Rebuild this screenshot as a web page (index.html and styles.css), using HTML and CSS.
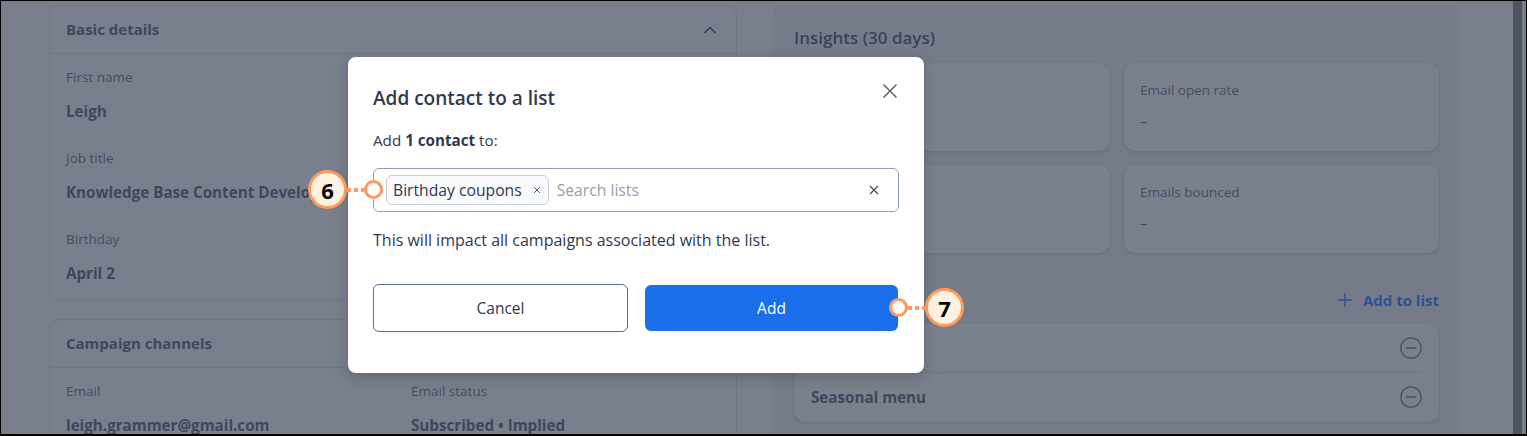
FILE: index.html
```html
<!DOCTYPE html>
<html lang="en">
<head>
  <meta charset="UTF-8" />
  <meta name="viewport" content="width=device-width, initial-scale=1.0" />
  <title>Add contact to a list</title>
  <link rel="stylesheet" href="styles.css">
</head>
<body>
  <div id="frame">
    <div id="page">
      <div id="details">
        <section class="panel panel-basic">
          <div class="panel-head">
            <h3>Basic details</h3>
            <svg class="chevron" width="14" height="8" viewBox="0 0 14 8"><path d="M1.5 7L7 1.5 12.5 7" fill="none" stroke="#323b54" stroke-width="1.3"/></svg>
          </div>
          <div class="panel-body">
            <div class="field"><span class="label">First name</span><span class="value">Leigh</span></div>
            <div class="field"><span class="label">Job title</span><span class="value">Knowledge Base Content Developer</span></div>
            <div class="field"><span class="label">Birthday</span><span class="value">April 2</span></div>
          </div>
        </section>
        <section class="panel">
          <div class="panel-head">
            <h3>Campaign channels</h3>
          </div>
          <div class="panel-body two-col">
            <div class="field"><span class="label">Email</span><span class="value">leigh.grammer@gmail.com</span></div>
            <div class="field"><span class="label">Email status</span><span class="value">Subscribed • Implied</span></div>
          </div>
        </section>
      </div>

      <div id="insights">
        <h2>Insights (30 days)</h2>
        <div class="stat-grid">
          <div class="stat"></div>
          <div class="stat"><span class="label">Email open rate</span><span class="stat-num">–</span></div>
          <div class="stat"></div>
          <div class="stat"><span class="label">Emails bounced</span><span class="stat-num">–</span></div>
        </div>
        <div class="list-head">
          <a class="add-link">
            <svg width="14" height="14" viewBox="0 0 14 14"><path d="M7 0v14M0 7h14" fill="none" stroke="#2c5196" stroke-width="1.4"/></svg>
            Add to list
          </a>
        </div>
        <div class="list-card">
          <div class="list-row">
            <span></span>
            <svg width="22" height="22" viewBox="0 0 22 22"><circle cx="11" cy="11" r="10.2" fill="none" stroke="#4a5269" stroke-width="1.3"/><path d="M6 11h10" stroke="#4a5269" stroke-width="1.5"/></svg>
          </div>
          <div class="list-row">
            <span>Seasonal menu</span>
            <svg width="22" height="22" viewBox="0 0 22 22"><circle cx="11" cy="11" r="10.2" fill="none" stroke="#4a5269" stroke-width="1.3"/><path d="M6 11h10" stroke="#4a5269" stroke-width="1.5"/></svg>
          </div>
        </div>
      </div>

      <div id="scrollbar"></div>
    </div>

    <div id="modal">
      <div class="modal-head">
        <h1>Add contact to a list</h1>
        <svg class="modal-close" width="16" height="16" viewBox="0 0 16 16"><path d="M1.5 1.5l13 13M14.5 1.5l-13 13" fill="none" stroke="#4d556b" stroke-width="1.4"/></svg>
      </div>
      <p class="modal-sub">Add <b>1 contact</b> to:</p>
      <div class="picker">
        <span class="chip">Birthday coupons
          <svg width="8" height="8" viewBox="0 0 8 8"><path d="M1 1l6 6M7 1L1 7" fill="none" stroke="#5a6175" stroke-width="1"/></svg>
        </span>
        <span class="placeholder">Search lists</span>
        <svg class="picker-clear" width="10" height="10" viewBox="0 0 10 10"><path d="M1 1l8 8M9 1L1 9" fill="none" stroke="#3d4660" stroke-width="1.1"/></svg>
      </div>
      <p class="modal-note">This will impact all campaigns associated with the list.</p>
      <div class="modal-btns">
        <button class="btn-cancel">Cancel</button>
        <button class="btn-add">Add</button>
      </div>
    </div>

    <div class="callout callout-6">
      <span class="badge">6</span><span class="dots"></span><span class="ring"></span>
    </div>
    <div class="callout callout-7">
      <span class="ring"></span><span class="dots"></span><span class="badge">7</span>
    </div>
  </div>
</body>
</html>
```

FILE: styles.css
```css
* {
  box-sizing: border-box;
}
html, body {
  margin: 0;
  height: 100%;
  overflow: hidden;
}
body {
  font-family: 'Open Sans', 'Noto Sans', sans-serif;
  background: #000;
  color: #3f475d;
}

#frame {
  position: relative;
  height: 433px;
  margin: 1px 0 0 1px;
  width: 1525px;
  overflow: hidden;
  background: #797f8c;
}

#page {
  display: flex;
  height: 100%;
  padding: 4px 0 0 48px;
}

/* left column */
#details {
  width: 688px;
  flex: none;
}
.panel {
  border: 1px solid #6f7688;
  border-radius: 10px;
  margin-bottom: 18px;
}
.panel-basic {
  height: 296px;
}
.panel-head {
  display: flex;
  justify-content: space-between;
  align-items: center;
  height: 48px;
  padding: 0 19px 0 16px;
  border-bottom: 1px solid #6f7688;
}
.panel-head h3 {
  margin: -2px 0 0;
  font-size: 15px;
  font-weight: 700;
}
.panel-body {
  padding: 13px 16px 0;
}
.two-col {
  display: flex;
}
.two-col .field {
  flex: none;
  width: 345px;
}
.field {
  display: flex;
  flex-direction: column;
  height: 81px;
}
.label {
  font-size: 13.5px;
  line-height: 20px;
  color: #454d63;
}
.value {
  margin-top: 14px;
  font-size: 15.2px;
  line-height: 20px;
  font-weight: 700;
  white-space: nowrap;
}

/* right column */
#insights {
  width: 687px;
  flex: none;
  margin-left: 36px;
  padding: 21px 21px 0;
  background: #757b89;
  border-radius: 10px 10px 0 0;
}
#insights h2 {
  margin: 0;
  font-size: 17px;
  line-height: 24px;
  font-weight: 600;
  color: #3a4259;
}
.stat-grid {
  display: grid;
  grid-template-columns: 316px 315px;
  grid-auto-rows: 88px;
  gap: 14px;
  margin-top: 13px;
}
.stat {
  display: flex;
  flex-direction: column;
  padding: 17px 16px 0;
  background: #7a808c;
  border-radius: 12px;
  box-shadow: 0 1px 3px rgba(60, 68, 90, 0.25);
}
.stat-num {
  margin-top: 11px;
  font-size: 15px;
  line-height: 20px;
}
.list-head {
  display: flex;
  justify-content: flex-end;
  align-items: center;
  height: 24px;
  margin-top: 35px;
}
.add-link {
  display: flex;
  align-items: center;
  gap: 11px;
  font-size: 15px;
  font-weight: 700;
  color: #2c5196;
}
.list-card {
  margin-top: 12px;
  padding-left: 17px;
  background: #7a808c;
  border-radius: 12px;
  box-shadow: 0 1px 3px rgba(60, 68, 90, 0.25);
  height: 98px;
}
.list-row {
  display: flex;
  justify-content: space-between;
  align-items: center;
  height: 48px;
  margin-right: 16px;
  padding-right: 1px;
  font-size: 15.2px;
  font-weight: 700;
}
.list-row:first-child {
  height: 49px;
  border-bottom: 1px solid #6f7688;
}

#scrollbar {
  flex: none;
  width: 9px;
  height: 434px;
  margin: -4px 0 0 53px;
  background: #4f5662;
}

/* dialog */
#modal {
  position: absolute;
  left: 347px;
  top: 56px;
  width: 576px;
  height: 316px;
  padding: 27px 25px 0;
  background: #fff;
  border-radius: 8px;
  color: #2f3950;
  box-shadow: 0 4px 14px rgba(40, 48, 70, 0.3);
}
.modal-head {
  display: flex;
  justify-content: space-between;
}
.modal-head h1 {
  margin: 0;
  font-size: 19px;
  line-height: 28px;
  font-weight: 600;
}
.modal-close {
  margin: -1px 1px 0 0;
  flex: none;
}
.modal-sub,
.modal-note {
  margin: 0;
  font-size: 15.2px;
  line-height: 20px;
}
.modal-sub {
  margin-top: 18px;
}
.picker {
  display: flex;
  align-items: center;
  height: 44px;
  margin-top: 18px;
  padding: 0 19px 0 12px;
  border: 1px solid #8f9dbb;
  border-radius: 6px;
}
.chip {
  display: flex;
  align-items: center;
  gap: 11px;
  height: 30px;
  padding: 0 7px 0 6px;
  background: #f9fafc;
  border: 1px solid #c5cede;
  border-radius: 6px;
  font-size: 15.7px;
}
.placeholder {
  flex: 1;
  margin-left: 8px;
  font-size: 15.7px;
  color: #9a9da8;
}
.modal-note {
  margin-top: 18px;
  font-size: 16px;
}
.modal-btns {
  display: flex;
  gap: 17px;
  margin-top: 34px;
}
.modal-btns button {
  font: inherit;
  font-size: 15.5px;
  border-radius: 6px;
  cursor: pointer;
}
.btn-cancel {
  width: 255px;
  height: 48px;
  background: #fff;
  color: #2f3950;
  border: 1px solid #5e6c93;
}
.btn-add {
  width: 253px;
  height: 46px;
  margin-top: 1px;
  background: #1a6eec;
  color: #fff;
  border: none;
}

/* numbered callouts */
.callout {
  position: absolute;
  display: flex;
  align-items: center;
}
.callout-6 {
  left: 307px;
  top: 169px;
}
.callout-7 {
  left: 888px;
  top: 287px;
}
.badge {
  display: flex;
  justify-content: center;
  align-items: center;
  width: 39px;
  height: 39px;
  background: #fff1e0;
  border: 3px solid #ff9a5c;
  border-radius: 50%;
  font-size: 22px;
  font-weight: 700;
  color: #000;
}
.dots {
  width: 17px;
  height: 4px;
  background: repeating-linear-gradient(90deg, #ff9a5c 0 4px, transparent 4px 7px);
}
.ring {
  width: 19px;
  height: 19px;
  background: #fff;
  border: 3px solid #ff9a5c;
  border-radius: 50%;
}
```
